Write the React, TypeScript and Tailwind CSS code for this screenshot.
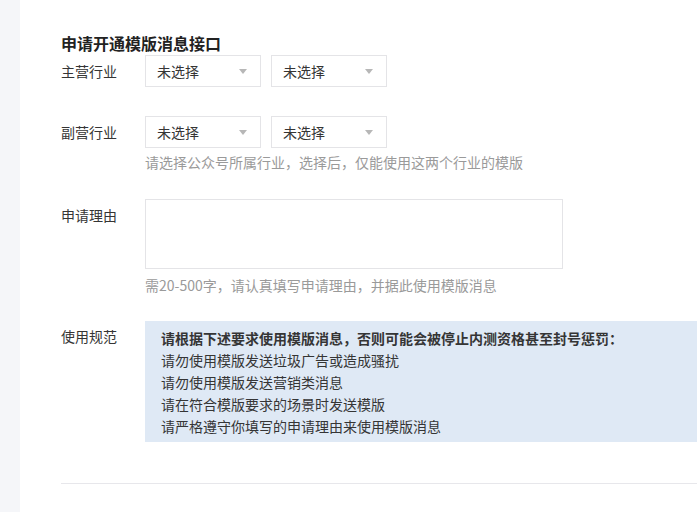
import React from "react";

const font = { fontFamily: '"Noto Sans CJK SC", "Noto Sans", sans-serif' };

const Select = () => (
    <div className="flex h-8 w-[116px] items-center justify-between border border-[#e4e4e7] bg-white pl-[11px] pr-[13px] text-sm text-[#353535]">
        <span className="leading-5">未选择</span>
        <span className="h-0 w-0 border-x-[4px] border-t-[5px] border-x-transparent border-t-[#b7b7b7]" />
    </div>
);

const Row = (props: { label: string; labelPad?: string; children: React.ReactNode; className?: string }) => (
    <div className={"flex " + (props.className || "")}>
        <div className={"w-[84px] shrink-0 text-sm leading-5 text-[#353535] " + (props.labelPad || "pt-[6px]")}>
            {props.label}
        </div>
        <div className="min-w-0 flex-1">{props.children}</div>
    </div>
);

const rules = [
    "请勿使用模版发送垃圾广告或造成骚扰",
    "请勿使用模版发送营销类消息",
    "请在符合模版要求的场景时发送模版",
    "请严格遵守你填写的申请理由来使用模版消息",
];

export default function App() {
    return (
        <div className="flex h-screen w-screen overflow-hidden bg-white" style={font}>
            <div className="w-5 shrink-0 bg-[#f5f6f9]" />
            <div className="flex-1 pl-[41px]">
                <h2 className="mt-[31px] text-base font-bold leading-6 text-[#222]">申请开通模版消息接口</h2>

                <Row label="主营行业">
                    <div className="flex gap-[10px]">
                        <Select />
                        <Select />
                    </div>
                </Row>

                <Row label="副营行业" className="mt-[29px]">
                    <div className="flex gap-[10px]">
                        <Select />
                        <Select />
                    </div>
                    <p className="mt-1 text-sm leading-5 text-[#9a9a9a]">
                        请选择公众号所属行业，选择后，仅能使用这两个行业的模版
                    </p>
                </Row>

                <Row label="申请理由" className="mt-[27px]">
                    <textarea className="block h-[70px] w-[418px] resize-none border border-[#e4e4e7] outline-none" />
                    <p className="mt-1.5 text-sm leading-5 text-[#9a9a9a]">
                        需20-500字，请认真填写申请理由，并据此使用模版消息
                    </p>
                </Row>

                <Row label="使用规范" labelPad="pt-[5px]" className="mt-[26px]">
                    <div className="bg-[#dfe9f5] pb-[5px] pl-4 pt-[6px] text-sm leading-[22px] text-[#353535]">
                        <p className="font-bold">请根据下述要求使用模版消息，否则可能会被停止内测资格甚至封号惩罚：</p>
                        {rules.map((rule) => (
                            <p key={rule}>{rule}</p>
                        ))}
                    </div>
                </Row>

                <div className="mt-[41px] border-t border-[#e7e7eb]" />
            </div>
        </div>
    );
}
